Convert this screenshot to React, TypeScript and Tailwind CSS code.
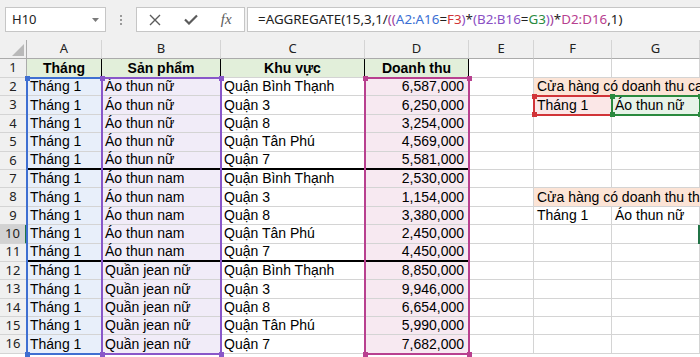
import React from "react";

const cellFont = { fontFamily: '"Liberation Sans", Arial, sans-serif' };
const uiFont = { fontFamily: '"Noto Sans", "Open Sans", sans-serif' };

type Row = [string, string, string, string];

const data: Row[] = [
  ["Tháng 1", "Áo thun nữ", "Quận Bình Thạnh", "6,587,000"],
  ["Tháng 1", "Áo thun nữ", "Quận 3", "6,250,000"],
  ["Tháng 1", "Áo thun nữ", "Quận 8", "3,254,000"],
  ["Tháng 1", "Áo thun nữ", "Quận Tân Phú", "4,569,000"],
  ["Tháng 1", "Áo thun nữ", "Quận 7", "5,581,000"],
  ["Tháng 1", "Áo thun nam", "Quận Bình Thạnh", "2,530,000"],
  ["Tháng 1", "Áo thun nam", "Quận 3", "1,154,000"],
  ["Tháng 1", "Áo thun nam", "Quận 8", "3,380,000"],
  ["Tháng 1", "Áo thun nam", "Quận Tân Phú", "2,450,000"],
  ["Tháng 1", "Áo thun nam", "Quận 7", "4,450,000"],
  ["Tháng 1", "Quần jean nữ", "Quận Bình Thạnh", "8,850,000"],
  ["Tháng 1", "Quần jean nữ", "Quận 3", "9,946,000"],
  ["Tháng 1", "Quần jean nữ", "Quận 8", "6,654,000"],
  ["Tháng 1", "Quần jean nữ", "Quận Tân Phú", "5,990,000"],
  ["Tháng 1", "Quần jean nữ", "Quận 7", "7,682,000"],
];

const cols = ["A", "B", "C", "D", "E", "F", "G"];

function Handle({ x, y, color }: { x: number; y: number; color: string }) {
  return (
    <div
      className="absolute w-[5px] h-[5px]"
      style={{ left: x - 2.5, top: y - 2.5, background: color }}
    />
  );
}

function RangeBox({
  x,
  y,
  w,
  h,
  color,
}: {
  x: number;
  y: number;
  w: number;
  h: number;
  color: string;
}) {
  return (
    <>
      <div
        className="absolute border-2 pointer-events-none"
        style={{ left: x - 1, top: y - 1, width: w + 2, height: h + 2, borderColor: color }}
      />
      <Handle x={x} y={y} color={color} />
      <Handle x={x + w} y={y} color={color} />
      <Handle x={x} y={y + h} color={color} />
      <Handle x={x + w} y={y + h} color={color} />
    </>
  );
}

export default function App() {
  const gl = "border-r border-b border-[#d4d4d4]";
  return (
    <div className="w-[700px] h-[357px] overflow-hidden bg-white relative">
      {/* Formula bar */}
      <div className="h-[40px] bg-[#f0f0f0] flex items-start pt-[7px] pl-[5px] overflow-hidden" style={uiFont}>
        <div className="w-[101px] h-[25px] bg-white border border-[#c6c6c6] flex items-center justify-between pl-[6px] pr-[6px] shrink-0">
          <span className="text-[13px] text-[#222]">H10</span>
          <svg width="7" height="4" viewBox="0 0 7 4">
            <path d="M0 0 L7 0 L3.5 4 Z" fill="#7a7a7a" />
          </svg>
        </div>
        <div className="w-[30px] h-[25px] flex flex-col items-center justify-center gap-[2px] shrink-0">
          <div className="w-[2px] h-[2px] bg-[#9a9a9a]" />
          <div className="w-[2px] h-[2px] bg-[#9a9a9a]" />
          <div className="w-[2px] h-[2px] bg-[#9a9a9a]" />
        </div>
        <div className="w-[109px] h-[25px] bg-white border border-[#c6c6c6] flex items-center shrink-0">
          <div className="w-[36px] flex justify-center">
            <svg width="12" height="12" viewBox="0 0 12 12">
              <path d="M1 1 L11 11 M11 1 L1 11" stroke="#5b5b5b" strokeWidth="1.4" />
            </svg>
          </div>
          <div className="w-[36px] flex justify-center">
            <svg width="14" height="11" viewBox="0 0 14 11">
              <path d="M1 5.5 L5 9.5 L13 1.5" stroke="#5b5b5b" strokeWidth="2.2" fill="none" />
            </svg>
          </div>
          <div className="w-[36px] flex justify-center">
            <span
              className="italic text-[15px] text-[#5b5b5b] leading-none"
              style={{ fontFamily: '"Liberation Serif", "Times New Roman", serif' }}
            >
              fx
            </span>
          </div>
        </div>
        <div className="ml-[2px] w-[470px] h-[25px] bg-white border border-[#c6c6c6] flex items-center pl-[10px] shrink-0 whitespace-nowrap text-[13.35px] text-[#222]">
          <span>=AGGREGATE(15,3,1/</span>
          <span className="text-[#a0409a]">((</span>
          <span className="text-[#3b6fd4]">A2:A16</span>
          <span>=</span>
          <span className="text-[#d13438]">F3</span>
          <span className="text-[#8a4fc4]">)</span>
          <span>*</span>
          <span className="text-[#8a4fc4]">(</span>
          <span className="text-[#8a4fc4]">B2:B16</span>
          <span>=</span>
          <span className="text-[#2a8a3e]">G3</span>
          <span className="text-[#8a4fc4]">)</span>
          <span className="text-[#a0409a]">)</span>
          <span>*</span>
          <span className="text-[#b8408f]">D2:D16</span>
          <span>,1)</span>
        </div>
      </div>

      {/* Sheet */}
      <div
        className="relative grid grid-cols-[27px_75px_119px_144px_104px_65px_78px_88px] grid-rows-[19px_19px_repeat(15,18.4px)]"
        style={cellFont}
      >
        {/* column headers */}
        <div className="bg-[#f0f0f0] border-r border-b border-[#ababab] relative">
          <svg className="absolute right-[2px] bottom-[2px]" width="12" height="12" viewBox="0 0 12 12">
            <path d="M12 0 L12 12 L0 12 Z" fill="#b9b9b9" />
          </svg>
        </div>
        {cols.map((c) => (
          <div
            key={c}
            className="bg-[#f0f0f0] border-r border-b border-r-[#d4d4d4] border-b-[#ababab] flex items-center justify-center text-[13px] text-[#222]"
            style={uiFont}
          >
            {c}
          </div>
        ))}

        {/* row 1 */}
        <div className="bg-[#f0f0f0] border-r border-b border-r-[#ababab] border-b-[#d4d4d4] flex items-center justify-center text-[13px] text-[#222]" style={uiFont}>
          1
        </div>
        {["Tháng", "Sản phẩm", "Khu vực", "Doanh thu"].map((t) => (
          <div
            key={t}
            className="bg-[#e2efda] border-r border-b border-r-[#000] border-b-[#d4d4d4] flex items-center justify-center font-bold text-[14px] text-black"
          >
            {t}
          </div>
        ))}
        <div className={gl} />
        <div className={gl} />
        <div className={gl} />

        {data.map((r, i) => {
          const rowNum = i + 2;
          const thick = rowNum === 6 || rowNum === 11;
          const bb = thick ? "border-b-2 border-b-black" : "border-b border-b-[#d4d4d4]";
          const sel = rowNum === 10;
          return (
            <React.Fragment key={rowNum}>
              <div
                className={`border-b border-b-[#d4d4d4] flex items-center justify-center text-[13px] text-[#222] ${
                  sel ? "bg-[#d2d2d2] border-r-2 border-r-[#217346]" : "bg-[#f0f0f0] border-r border-r-[#ababab]"
                }`}
                style={uiFont}
              >
                {rowNum}
              </div>
              <div className={`bg-[#e8effa] border-r border-r-[#d4d4d4] ${bb} flex items-center pl-[3px] text-[14px] text-black whitespace-nowrap`}>
                {r[0]}
              </div>
              <div className={`bg-[#f1ecf8] border-r border-r-[#d4d4d4] ${bb} flex items-center pl-[3px] text-[14px] text-black whitespace-nowrap`}>
                {r[1]}
              </div>
              <div className={`bg-white border-r border-r-[#d4d4d4] ${bb} flex items-center pl-[3px] text-[14px] text-black whitespace-nowrap`}>
                {r[2]}
              </div>
              <div className={`bg-[#f7e9f1] border-r border-r-[#d4d4d4] ${bb} flex items-center justify-end pr-[4px] text-[14px] text-black whitespace-nowrap`}>
                {r[3]}
              </div>
              <div className={gl} />
              {rowNum === 2 || rowNum === 8 ? (
                <div className="col-span-2 bg-[#fce4d6] border-b border-b-[#d4d4d4] flex items-center pl-[3px] text-[14px] text-black whitespace-nowrap overflow-hidden">
                  {rowNum === 2 ? "Cửa hàng có doanh thu cao nhất" : "Cửa hàng có doanh thu thấp nhất"}
                </div>
              ) : rowNum === 3 || rowNum === 9 ? (
                <>
                  <div className={`${gl} ${rowNum === 3 ? "bg-[#fbe7e7]" : ""} flex items-center pl-[3px] text-[14px] text-black whitespace-nowrap`}>
                    Tháng 1
                  </div>
                  <div className={`${gl} ${rowNum === 3 ? "bg-[#e7f3e8]" : ""} flex items-center pl-[3px] text-[14px] text-black whitespace-nowrap`}>
                    Áo thun nữ
                  </div>
                </>
              ) : (
                <>
                  <div className={gl} />
                  <div className={gl} />
                </>
              )}
            </React.Fragment>
          );
        })}

        {/* reference range highlights (overlays), coordinates relative to sheet top (y=40) */}
        <RangeBox x={27} y={38} w={75} h={276} color="#3f6fd1" />
        <RangeBox x={102} y={38} w={119} h={276} color="#8957c9" />
        <RangeBox x={365} y={38} w={104} h={276} color="#b8408f" />
        <RangeBox x={534} y={56.4} w={78} h={18.4} color="#d13438" />
        <RangeBox x={612} y={56.4} w={88} h={18.4} color="#2a8a3e" />
        {/* active cell H10 edge */}
        <div className="absolute left-[698px] top-[185px] w-[2px] h-[19px] bg-[#217346]" />
      </div>
    </div>
  );
}
